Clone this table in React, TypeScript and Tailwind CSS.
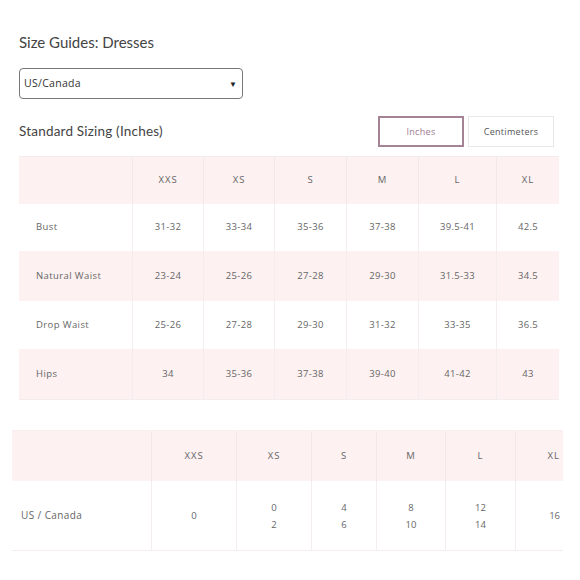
import React from "react";

const heads = ["XXS", "XS", "S", "M", "L", "XL"];
const rows: { label: string; vals: string[]; pink: boolean; h: string }[] = [
  { label: "Bust", vals: ["31-32", "33-34", "35-36", "37-38", "39.5-41", "42.5"], pink: false, h: "h-[47px]" },
  { label: "Natural Waist", vals: ["23-24", "25-26", "27-28", "29-30", "31.5-33", "34.5"], pink: true, h: "h-[50px]" },
  { label: "Drop Waist", vals: ["25-26", "27-28", "29-30", "31-32", "33-35", "36.5"], pink: false, h: "h-[48px]" },
  { label: "Hips", vals: ["34", "35-36", "37-38", "39-40", "41-42", "43"], pink: true, h: "h-[50px]" },
];

const usVals: string[][] = [["0"], ["0", "2"], ["4", "6"], ["8", "10"], ["12", "14"], ["16"]];

export default function App() {
  const font = { fontFamily: "Lato, 'Open Sans', sans-serif" };
  return (
    <div className="w-[580px] h-[580px] bg-white overflow-hidden relative text-[#555]" style={{ fontFamily: "'Open Sans', sans-serif" }}>
      <div className="pl-[19px] pt-[31px]">
        <div className="text-[15px] leading-[22px] text-[#444]" style={font}>Size Guides: Dresses</div>
        <div className="mt-[15px] w-[224px] h-[31px] border border-[#777] rounded-[4px] flex items-center justify-between pl-[4px] pr-[5px]">
          <span className="text-[10.5px] text-[#333] tracking-[0.3px]">US/Canada</span>
          <span className="text-[8px] text-[#222]">▼</span>
        </div>
        <div className="mt-[17px] flex items-center justify-between w-[535px]">
          <span className="text-[13.5px] text-[#444] tracking-[0.2px]" style={font}>Standard Sizing (Inches)</span>
          <div className="flex gap-[4px]">
            <div className="w-[86px] h-[31px] border-2 border-[#a58396] flex items-center justify-center text-[9px] text-[#a07a90] tracking-[0.3px]">Inches</div>
            <div className="w-[86px] h-[31px] border border-[#e8e8e8] flex items-center justify-center text-[9px] text-[#555] tracking-[0.3px]">Centimeters</div>
          </div>
        </div>
        <div className="mt-[9px] w-[540px] border-t border-b border-[#f3eded] text-[9.5px] text-[#666]">
          <div className="grid grid-cols-[114px_71px_71px_72px_72px_78px_62px] h-[47px] bg-[#fdf1f1]">
            <div className="border-r border-[#f2e8e8]" />
            {heads.map((h, i) => (
              <div key={h} className={`flex items-center justify-center tracking-[1px] ${i < 5 ? "border-r border-[#f2e8e8]" : ""}`}>{h}</div>
            ))}
          </div>
          {rows.map((r) => (
            <div key={r.label} className={`grid grid-cols-[114px_71px_71px_72px_72px_78px_62px] ${r.h} ${r.pink ? "bg-[#fdf1f1]" : "bg-white"}`}>
              <div className="flex items-center pl-[17px] border-r border-[#f3eded] tracking-[0.4px]">{r.label}</div>
              {r.vals.map((v, i) => (
                <div key={i} className={`flex items-center justify-center tracking-[0.3px] ${i < 5 ? "border-r border-[#f3eded]" : ""}`}>{v}</div>
              ))}
            </div>
          ))}
        </div>
      </div>
      <div className="ml-[12px] mt-[30px] w-[551px] text-[9.5px] text-[#666]">
        <div className="grid grid-cols-[140px_85px_75px_65px_69px_70px_47px] h-[51px] bg-[#fdf1f1] border-t border-[#f7efef]">
          <div className="border-r border-[#f2e8e8]" />
          {heads.map((h, i) => (
            <div key={h} className={`flex items-center tracking-[1px] ${i < 5 ? "justify-center border-r border-[#f2e8e8]" : "justify-end pr-[3px]"}`}>{h}</div>
          ))}
        </div>
        <div className="grid grid-cols-[140px_85px_75px_65px_69px_70px_47px] h-[70px] bg-white border-b border-[#f3eded]">
          <div className="flex items-center pl-[9px] border-r border-[#f3eded] text-[10px] tracking-[0.4px]">US / Canada</div>
          {usVals.map((v, i) => (
            <div key={i} className={`flex flex-col items-center justify-center leading-[17px] ${i < 5 ? "border-r border-[#f3eded]" : "items-end pr-[3px]"}`}>
              {v.map((x) => (
                <span key={x}>{x}</span>
              ))}
            </div>
          ))}
        </div>
      </div>
    </div>
  );
}
